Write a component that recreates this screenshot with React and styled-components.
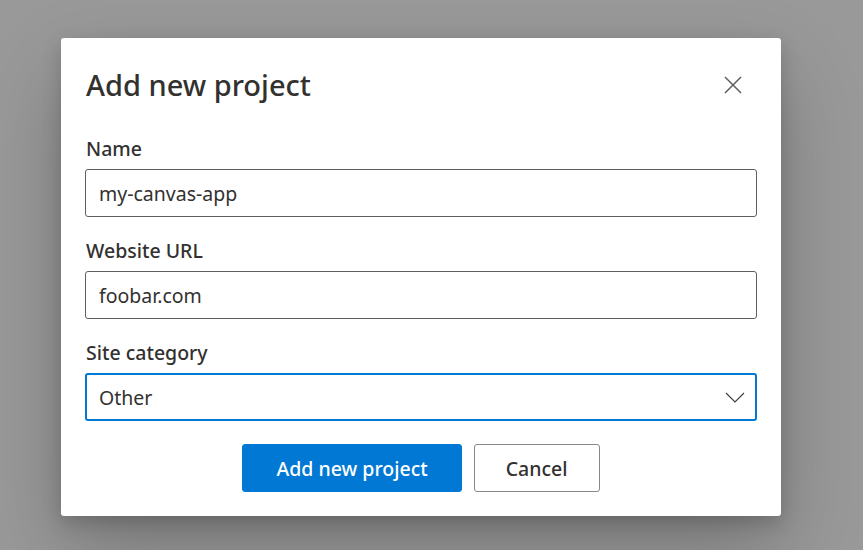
import React from "react";
import styled, { createGlobalStyle } from "styled-components";

const Global = createGlobalStyle`
  html, body { margin: 0; padding: 0; }
  body {
    width: 863px;
    height: 550px;
    overflow: hidden;
    background: #999999;
    font-family: "Noto Sans", "Open Sans", "Liberation Sans", sans-serif;
  }
  * { box-sizing: border-box; }
`;

const Overlay = styled.div`
  width: 863px;
  height: 550px;
  padding: 38px 0 0 61px;
`;

const Dialog = styled.div`
  width: 720px;
  height: 478px;
  background: #ffffff;
  border-radius: 3px;
  box-shadow: 0 36px 82px rgba(0, 0, 0, 0.22), 0 7px 20px rgba(0, 0, 0, 0.18);
  padding: 25px 24px 0 24px;
  display: flex;
  flex-direction: column;
`;

const Header = styled.div`
  display: flex;
  align-items: center;
  justify-content: space-between;
  height: 44px;
  margin-bottom: 28px;
`;

const Title = styled.h1`
  margin: 0 0 0 1px;
  font-size: 29px;
  font-weight: 500;
  color: #323130;
  line-height: 44px;
`;

const CloseButton = styled.button`
  border: none;
  background: transparent;
  width: 30px;
  height: 30px;
  margin-right: 9px;
  padding: 0;
  display: flex;
  align-items: center;
  justify-content: center;
  cursor: pointer;
`;

const Field = styled.div`
  display: flex;
  flex-direction: column;
  margin-bottom: ${(p) => p.$gap}px;
`;

const Label = styled.label`
  font-size: 19.5px;
  font-weight: 500;
  color: #323130;
  line-height: 28px;
  margin: 0 0 6px 1px;
`;

const Input = styled.div`
  height: 48px;
  border: ${(p) => (p.$focused ? "2px solid #0078d4" : "1px solid #605e5c")};
  border-radius: 3px;
  padding: 0 ${(p) => (p.$focused ? 10 : 12)}px 0 ${(p) => (p.$focused ? 12 : 13)}px;
  display: flex;
  align-items: center;
  justify-content: space-between;
  font-size: 19.5px;
  color: #323130;
`;

const Actions = styled.div`
  display: flex;
  justify-content: center;
  gap: 12px;
  margin-top: 23px;
`;

const Button = styled.button`
  height: 48px;
  padding: 0 ${(p) => (p.$primary ? 33 : 31)}px;
  border-radius: 3px;
  border: 1px solid ${(p) => (p.$primary ? "#0078d4" : "#8a8886")};
  background: ${(p) => (p.$primary ? "#0078d4" : "#ffffff")};
  color: ${(p) => (p.$primary ? "#ffffff" : "#323130")};
  font-family: inherit;
  font-size: 19.5px;
  font-weight: 500;
  cursor: pointer;
`;

export default function App() {
  return (
    <>
      <Global />
      <Overlay>
        <Dialog>
          <Header>
            <Title>Add new project</Title>
            <CloseButton aria-label="Close">
              <svg width="18" height="18" viewBox="0 0 18 18">
                <path d="M1 1 L17 17 M17 1 L1 17" stroke="#605e5c" strokeWidth="1.5" fill="none" />
              </svg>
            </CloseButton>
          </Header>
          <Field $gap={20}>
            <Label>Name</Label>
            <Input>my-canvas-app</Input>
          </Field>
          <Field $gap={20}>
            <Label>Website URL</Label>
            <Input>foobar.com</Input>
          </Field>
          <Field $gap={0}>
            <Label>Site category</Label>
            <Input $focused>
              <span>Other</span>
              <svg width="20" height="11" viewBox="0 0 20 11">
                <path d="M1 1 L10 10 L19 1" stroke="#3b3a39" strokeWidth="1.1" fill="none" />
              </svg>
            </Input>
          </Field>
          <Actions>
            <Button $primary>Add new project</Button>
            <Button>Cancel</Button>
          </Actions>
        </Dialog>
      </Overlay>
    </>
  );
}
